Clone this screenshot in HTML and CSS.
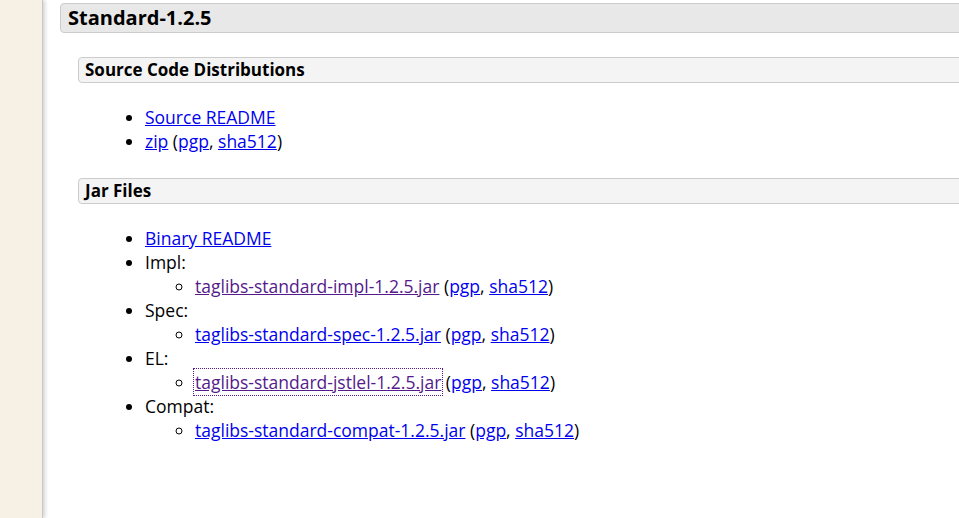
FILE: index.html
```html
<!DOCTYPE html>
<html>
<head>
<meta charset="utf-8">
<link rel="stylesheet" href="styles.css">
</head>
<body>
<div class="page">
  <div class="sidebar"></div>
  <div class="main">
    <div class="section">
      <h2 class="section-title">Standard-1.2.5</h2>
      <div class="subsection">
        <h3 class="subsection-title">Source Code Distributions</h3>
        <ul class="list">
          <li><a href="#src-readme">Source README</a></li>
          <li><a href="#zip">zip</a> (<a href="#zip-pgp">pgp</a>, <a href="#zip-sha">sha512</a>)</li>
        </ul>
      </div>
      <div class="subsection">
        <h3 class="subsection-title">Jar Files</h3>
        <ul class="list">
          <li><a href="#bin-readme">Binary README</a></li>
          <li>Impl:
            <ul class="sublist">
              <li><a class="visited" href="#impl">taglibs-standard-impl-1.2.5.jar</a> (<a href="#impl-pgp">pgp</a>, <a href="#impl-sha">sha512</a>)</li>
            </ul>
          </li>
          <li>Spec:
            <ul class="sublist">
              <li><a href="#spec">taglibs-standard-spec-1.2.5.jar</a> (<a href="#spec-pgp">pgp</a>, <a href="#spec-sha">sha512</a>)</li>
            </ul>
          </li>
          <li>EL:
            <ul class="sublist">
              <li><a class="visited focused" href="#jstlel">taglibs-standard-jstlel-1.2.5.jar</a> (<a href="#el-pgp">pgp</a>, <a href="#el-sha">sha512</a>)</li>
            </ul>
          </li>
          <li>Compat:
            <ul class="sublist">
              <li><a href="#compat">taglibs-standard-compat-1.2.5.jar</a> (<a href="#compat-pgp">pgp</a>, <a href="#compat-sha">sha512</a>)</li>
            </ul>
          </li>
        </ul>
      </div>
    </div>
  </div>
</div>
</body>
</html>
```
FILE: styles.css
```css
html, body {
  margin: 0;
  padding: 0;
  height: 100%;
  overflow: hidden;
  background: #fff;
}
body {
  font-family: "Open Sans", "Liberation Sans", sans-serif;
  font-size: 17.5px;
  color: #000;
}
.page {
  display: flex;
  min-height: 518px;
}
.sidebar {
  width: 42px;
  flex: 0 0 42px;
  background: #f7f0e4;
  border-right: 1px solid #c8c8c8;
  box-shadow: 2px 0 4px rgba(0,0,0,0.18);
  position: relative;
  z-index: 1;
}
.main {
  flex: 1;
  padding: 3px 0 0 17px;
  overflow: hidden;
}
.section {
  margin-right: -40px;
}
.section-title {
  margin: 0;
  font-size: 20px;
  font-weight: 700;
  background: #e8e8e8;
  border: 1px solid #cccccc;
  border-radius: 4px;
  padding: 0 7px;
  height: 28px;
  line-height: 28px;
}
.subsection {
  margin-left: 18px;
  margin-top: 24px;
}
.subsection + .subsection {
  margin-top: 25px;
}
.subsection-title {
  margin: 0;
  font-size: 17px;
  font-weight: 700;
  background: #f4f4f4;
  border: 1px solid #cccccc;
  border-radius: 4px;
  padding: 0 6px;
  height: 24px;
  line-height: 24px;
}
.list {
  margin: 22px 0 0 0;
  padding-left: 67px;
  line-height: 24px;
  list-style: disc;
}
.sublist {
  margin: 0;
  padding-left: 50px;
  list-style: circle;
}
a {
  color: #0000ee;
}
a.visited {
  color: #551a8b;
}
a.focused {
  outline: 1px dotted #551a8b;
  outline-offset: 1px;
}
```
